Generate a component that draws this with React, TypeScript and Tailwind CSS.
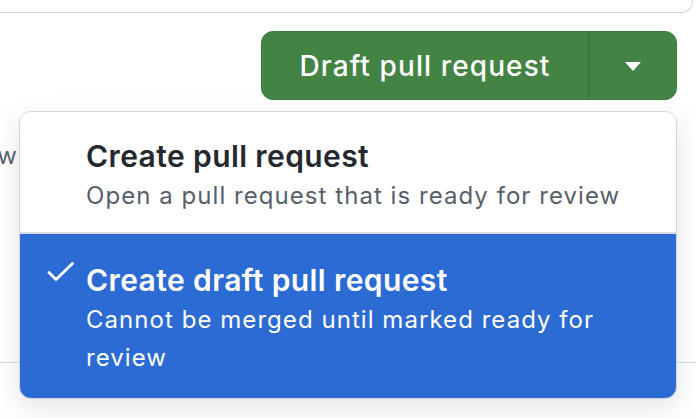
import React from 'react';

const CheckIcon: React.FC = () => (
    <svg width="28" height="20" viewBox="0 0 28 20" fill="none" className="block">
        <path d="M2 10.5 L9 17.5 L25.5 1.5" stroke="white" strokeWidth="2.8" strokeLinecap="round" strokeLinejoin="round" />
    </svg>
);

const App: React.FC = () => {
    return (
        <div className="relative w-[696px] h-[418px] overflow-hidden bg-white font-['Inter',_'Liberation_Sans',_sans-serif]">
            {/* Box above */}
            <div className="h-[13px] mr-[3px] border-b-[1.5px] border-r-[1.5px] border-[#d0d7de] rounded-br-[12px]" />

            {/* Split button */}
            <div className="mt-[18px] flex justify-end pr-[19px]">
                <div className="flex h-[69px] rounded-[12px] border-[1.5px] border-[#3c7a3f] bg-[#438445] text-white overflow-hidden">
                    <button className="w-[326px] flex items-center justify-center text-[28px] font-medium tracking-[1.1px]">
                        Draft pull request
                    </button>
                    <div className="w-[2px] bg-[#3a763c]" />
                    <button className="w-[86px] flex items-center justify-center" aria-label="More options">
                        <svg width="16" height="9" viewBox="0 0 16 9" className="block mt-[1px]">
                            <path d="M0 0 H16 L8 9 Z" fill="white" />
                        </svg>
                    </button>
                </div>
            </div>

            {/* Content behind menu */}
            <div className="mt-[38px] w-[18px] flex justify-end overflow-hidden whitespace-nowrap text-[24px] leading-[36px] tracking-[1px] text-[#57606a]">
                ow
            </div>
            <div className="mt-[188px] border-t-[1.5px] border-[#d0d7de]" />

            {/* Dropdown menu */}
            <div className="absolute left-[19px] top-[111px] w-[658px] rounded-[12px] border-[1.5px] border-[#d0d7de] bg-white overflow-hidden shadow-[0_8px_24px_rgba(140,149,159,0.25)]">
                <div className="flex pl-[66px] pr-[30px] pt-[23px] pb-[17px]">
                    <div className="flex flex-col">
                        <div className="text-[30px] leading-[42px] font-semibold tracking-[0.4px] text-[#24292f]">Create pull request</div>
                        <div className="text-[24px] leading-[38px] tracking-[1.05px] text-[#57606a]">Open a pull request that is ready for review</div>
                    </div>
                </div>
                <div className="h-[2px] bg-[#d8dee4]" />
                <div className="flex bg-[#2b6bd3] pl-[27px] pr-[30px] pt-[25px] pb-[21px]">
                    <div className="w-[39px] pt-[3px] shrink-0">
                        <CheckIcon />
                    </div>
                    <div className="flex flex-col">
                        <div className="text-[30px] leading-[42px] font-semibold tracking-[0.4px] text-white">Create draft pull request</div>
                        <div className="text-[24px] leading-[38px] tracking-[1.05px] text-white">Cannot be merged until marked ready for review</div>
                    </div>
                </div>
            </div>
        </div>
    );
};

export default App;
